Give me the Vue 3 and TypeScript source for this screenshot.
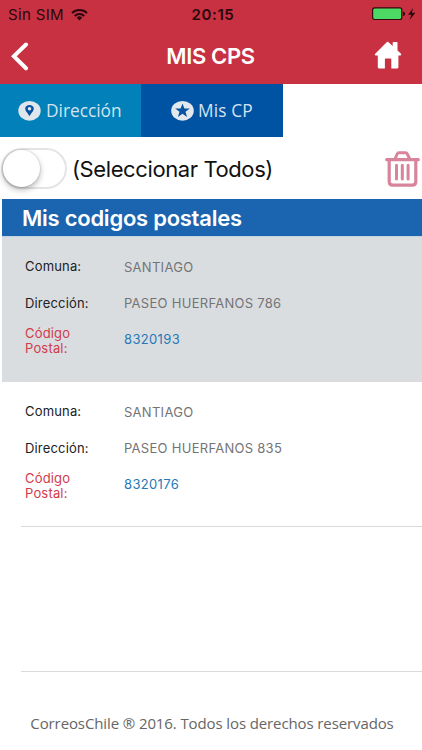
<script setup lang="ts">
import { ref } from 'vue'

interface PostalCode {
  comuna: string
  direccion: string
  codigo: string
  selected: boolean
}

const selectAll = ref<boolean>(false)
const codes = ref<PostalCode[]>([
  { comuna: 'SANTIAGO', direccion: 'PASEO HUERFANOS 786', codigo: '8320193', selected: true },
  { comuna: 'SANTIAGO', direccion: 'PASEO HUERFANOS 835', codigo: '8320176', selected: false },
])
</script>

<template>
  <div class="screen">
    <header class="header">
      <div class="status">
        <div class="carrier">
          <span class="sim">Sin SIM</span>
          <svg class="wifi" width="17" height="13" viewBox="0 0 17 13">
            <g fill="none" stroke="#2b080d" stroke-width="2">
              <path d="M1 5.1a10.8 10.8 0 0 1 15 0" />
              <path d="M3.7 8a6.9 6.9 0 0 1 9.6 0" />
            </g>
            <path d="M5.7 9.7a4 4 0 0 1 5.6 0l-2.8 2.8z" fill="#2b080d" />
          </svg>
        </div>
        <span class="time">20:15</span>
        <svg class="battery" width="50" height="14" viewBox="0 0 50 14">
          <rect x=".6" y=".9" width="29.2" height="11.6" rx="2" fill="#4cd964" stroke="#35090e" stroke-width="1.2" />
          <path d="M31 4.4c2.800.4 2.800 4.200 0 4.600z" fill="#2b080d" />
          <path d="M41 1L36 7.800h3.300L37.600 13l5.800-7.200h-3.500z" fill="#2b080d" />
        </svg>
      </div>
      <div class="nav">
        <svg class="back" width="18" height="29" viewBox="0 0 18 29">
          <path d="M15 2.500L2.800 14.300L15 26.300" fill="none" stroke="#fff" stroke-width="4" stroke-linecap="round" />
        </svg>
        <h1 class="title">MIS CPS</h1>
        <svg class="home" width="28" height="28" viewBox="0 0 28 28">
          <path d="M14 0.800L18.700 5.100V1.800Q18.700 1 19.500 1H22.700Q23.500 1 23.500 1.800V9.400L27 12.700Q27.700 14.300 26.300 14.500H24.400V26.300Q24.400 27.400 23.300 27.400H17.300V18.200Q17.300 17.400 16.500 17.400H11.700Q10.900 17.400 10.900 18.200V27.400H4.900Q3.800 27.400 3.800 26.300V14.500H1.700Q.2 14.200 1 12.900L12.700 1.300Q13.400.500 14 .800Z" fill="#fff" />
        </svg>
      </div>
    </header>

    <nav class="tabs">
      <div class="tab tab-address">
        <svg width="24" height="22" viewBox="0 0 24 22">
          <ellipse cx="11.500" cy="10.800" rx="11.200" ry="9.900" fill="#dfe6ec" />
          <path fill-rule="evenodd" d="M11.500 16.300C10.200 13.300 7.200 11.300 7.200 8.500C7.200 3.800 15.800 3.800 15.800 8.500C15.800 11.300 12.800 13.300 11.500 16.300ZM11.500 6.900a1.800 1.800 0 1 0 0 3.600a1.800 1.800 0 1 0 0-3.600Z" fill="#0752a1" />
        </svg>
        <span class="tab-address-text">Dirección</span>
      </div>
      <div class="tab tab-codes">
        <svg width="24" height="22" viewBox="0 0 24 22">
          <ellipse cx="11.500" cy="10.800" rx="11.300" ry="9.900" fill="#e3e8ef" />
          <path d="M11.500 3.500L13.400 8.500H18.800L14.500 11.700L16.100 16.900L11.500 13.800L6.900 16.900L8.500 11.700L4.200 8.500H9.600Z" fill="#0752a1" />
        </svg>
        <span class="tab-codes-text">Mis CP</span>
      </div>
    </nav>

    <div class="select-row">
      <div class="toggle" :class="{ on: selectAll }" role="switch" @click="selectAll = !selectAll">
        <div class="knob"></div>
      </div>
      <span class="select-text">(Seleccionar Todos)</span>
      <svg class="trash" width="35" height="36" viewBox="0 0 35 36">
        <g fill="none" stroke="#d8849b" stroke-linejoin="round" stroke-linecap="round">
          <path d="M1.700 8.700H33.300" stroke-width="3.200" />
          <path d="M10 8L12.200 3Q12.700 1.800 14 1.800H20.500Q21.800 1.800 22.300 3L24.700 8" stroke-width="3" />
          <path d="M4.200 9V30.500Q4.200 34.200 7.800 34.200H27.200Q30.800 34.200 30.800 30.500V9" stroke-width="3.200" />
          <path d="M11.500 14.300V28M17.300 14.300V28M23.100 14.300V28" stroke-width="3" />
        </g>
      </svg>
    </div>

    <h2 class="section"><span>Mis codigos postales</span></h2>

    <main class="list">
      <article v-for="item in codes" :key="item.codigo" class="item" :class="{ selected: item.selected }">
        <dl class="fields">
          <dt class="k-comuna"><span>Comuna:</span></dt>
          <dd class="v-comuna">{{ item.comuna }}</dd>
          <dt class="k-direccion"><span>Dirección:</span></dt>
          <dd class="v-direccion">{{ item.direccion }}</dd>
          <dt class="k-codigo">Código<br />Postal:</dt>
          <dd class="v-codigo">{{ item.codigo }}</dd>
        </dl>
      </article>
      <div class="item"></div>
    </main>

    <footer class="footer">CorreosChile ® 2016. Todos los derechos reservados</footer>
  </div>
</template>

<style>
body {
  background: #fff;
}
</style>

<style scoped>
.screen {
  display: flex;
  flex-direction: column;
  width: 422px;
  height: 750px;
  overflow: hidden;
  background: #fff;
  font-family: Inter, 'Liberation Sans', sans-serif;
  white-space: nowrap;
}
.screen * {
  box-sizing: border-box;
}
svg {
  display: block;
  flex: none;
}
.header {
  height: 84px;
  background: #c83142;
  flex: none;
}
.status {
  display: grid;
  grid-template-columns: 1fr auto 1fr;
  align-items: center;
  height: 28px;
  padding: 0 0 0 8px;
  color: #2b080d;
}
.carrier {
  display: flex;
  align-items: center;
  gap: 7px;
}
.sim {
  font-size: 15px;
  letter-spacing: 0.35px;
}
.time {
  font-size: 15px;
  font-weight: 600;
  letter-spacing: 0.6px;
  margin-right: 4px;
}
.battery {
  justify-self: end;
}
.nav {
  display: flex;
  align-items: center;
  justify-content: space-between;
  height: 56px;
  padding: 0 20px 0 11px;
}
.title {
  margin: 0 0 0 18px;
  color: #fff;
  font-size: 22px;
  font-weight: 600;
  letter-spacing: -0.35px;
  line-height: 28px;
}
.home {
  margin-top: -3px;
}
.tabs {
  display: flex;
  height: 53px;
  flex: none;
}
.tab {
  display: flex;
  align-items: center;
  color: #d5e4ef;
  font-family: 'Open Sans', sans-serif;
  font-size: 17.3px;
}
.tab-address {
  width: 141px;
  padding-left: 18px;
  gap: 4px;
  background: #0280b9;
}
.tab-codes {
  width: 142px;
  padding-left: 30px;
  gap: 3px;
  background: #0052a3;
}
.tab-codes-text {
  letter-spacing: 0.15px;
}
.select-row {
  display: flex;
  align-items: center;
  height: 62px;
  padding: 1px 2px 0 1px;
  flex: none;
}
.toggle {
  width: 66px;
  height: 41px;
  border: 2px solid #e4e4e4;
  border-radius: 21px;
  background: #fff;
}
.toggle.on {
  background: #4cd964;
}
.knob {
  width: 37px;
  height: 37px;
  border-radius: 50%;
  background: #fff;
  box-shadow: 0 3px 6px rgba(0, 0, 0, 0.28), 0 0 1px 1px rgba(0, 0, 0, 0.08);
}
.toggle.on .knob {
  margin-left: auto;
}
.select-text {
  margin-left: 5px;
  font-size: 22px;
  letter-spacing: -0.4px;
  color: #111;
}
.trash {
  margin-left: auto;
}
.section {
  display: flex;
  align-items: center;
  height: 38px;
  margin: 0 0 0 2px;
  padding: 1px 0 0 20px;
  background: #1b64af;
  border-bottom: 1px solid #c4d3e4;
  color: #fff;
  font-size: 22px;
  font-weight: 600;
  letter-spacing: -0.25px;
  flex: none;
}
.list {
  display: flex;
  flex-direction: column;
  margin-left: 2px;
}
.item {
  height: 145px;
  flex: none;
  background: linear-gradient(#dadada, #dadada) 19px 100% / 100% 1px no-repeat;
}
.item.selected {
  background-color: #dadde0;
}
.fields {
  display: grid;
  grid-template-columns: 99px 1fr;
  grid-template-rows: 36px 36px 36px;
  align-items: center;
  margin: 0;
  padding: 12px 0 0 23px;
  font-size: 13px;
}
dt {
  color: #202124;
  letter-spacing: 0.17px;
}
dd {
  margin: 0;
  color: #737476;
  letter-spacing: 0.28px;
}
.k-comuna {
  padding-bottom: 2px;
}
.k-codigo {
  padding-top: 3px;
  color: #d13b4b;
  line-height: 15px;
}
.v-direccion {
  padding-bottom: 1px;
}
.v-codigo {
  color: #2678b7;
  letter-spacing: 0.35px;
}
.footer {
  margin-top: 40px;
  padding-left: 2px;
  text-align: center;
  color: #666;
  font-family: 'Open Sans', sans-serif;
  font-size: 15px;
  letter-spacing: -0.11px;
  line-height: 22px;
}
</style>
